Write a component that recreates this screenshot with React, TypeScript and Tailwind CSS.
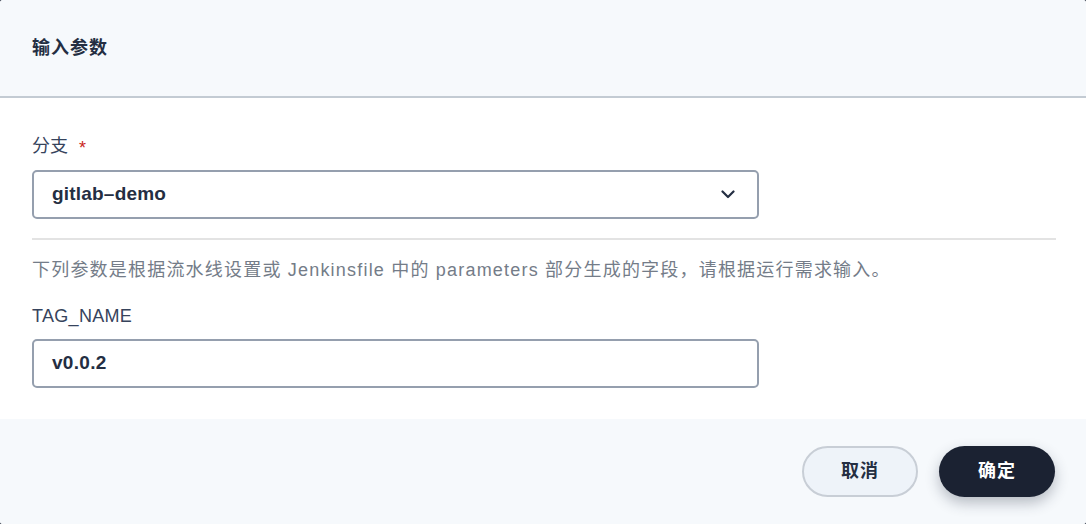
import React from "react";

const font = { fontFamily: '"Liberation Sans", "Noto Sans CJK SC", sans-serif' };

export default function App() {
  return (
    <div className="w-[1086px] h-[524px] bg-[#3a4252]" style={font}>
      <div className="w-full h-full rounded-[3px] overflow-hidden flex flex-col bg-white">
        <div className="h-[98px] shrink-0 bg-[#f6f9fc] border-b-2 border-[#c3cbd3] flex items-center px-[32px]">
          <span className="text-[18px] tracking-[1px] font-bold text-[#242e42] leading-none">输入参数</span>
        </div>
        <div className="flex-1 bg-white px-[32px] pt-[37px]">
          <div className="flex items-center h-[22px] text-[18px] text-[#36435c] leading-none">
            <span>分支</span>
            <span className="text-[#ca2621] ml-[11px] mt-[3px]">*</span>
          </div>
          <div className="mt-[13px] w-[727px] h-[49px] border-2 border-[#959fae] rounded-[5px] flex items-center justify-between pl-[18px] pr-[22px]">
            <span className="text-[19px] tracking-[0.2px] font-bold text-[#242e42]">gitlab–demo</span>
            <svg width="14" height="9" viewBox="0 0 14 9" fill="none">
              <path d="M1.5 1.5 L7 7 L12.5 1.5" stroke="#242e42" strokeWidth="2.2" strokeLinecap="round" strokeLinejoin="round" />
            </svg>
          </div>
          <div className="mt-[19px] w-[1024px] h-[2px] bg-[#e3e3e3]" />
          <div className="mt-[18px] text-[18px] tracking-[1.2px] text-[#747c88] leading-[24px] whitespace-nowrap">
            下列参数是根据流水线设置或 Jenkinsfile 中的 parameters 部分生成的字段，请根据运行需求输入。
          </div>
          <div className="mt-[23px] text-[18px] tracking-[0.3px] text-[#36435c] leading-[22px]">TAG_NAME</div>
          <div className="mt-[12px] w-[727px] h-[49px] border-2 border-[#959fae] rounded-[5px] flex items-center pl-[18px]">
            <span className="text-[19px] tracking-[0.3px] font-bold text-[#242e42]">v0.0.2</span>
          </div>
        </div>
        <div className="h-[105px] shrink-0 bg-[#f6f9fc] flex items-start justify-end gap-[21px] pr-[31px] pt-[27px]">
          <button className="w-[116px] h-[51px] rounded-full border-2 border-[#c8ced6] bg-[#eef3f9] text-[18px] tracking-[1px] font-bold text-[#242e42]">
            取消
          </button>
          <button className="w-[116px] h-[51px] rounded-full bg-[#1b2232] text-[18px] tracking-[1px] font-bold text-white shadow-[0_6px_14px_rgba(36,46,66,0.3)]">
            确定
          </button>
        </div>
      </div>
    </div>
  );
}
